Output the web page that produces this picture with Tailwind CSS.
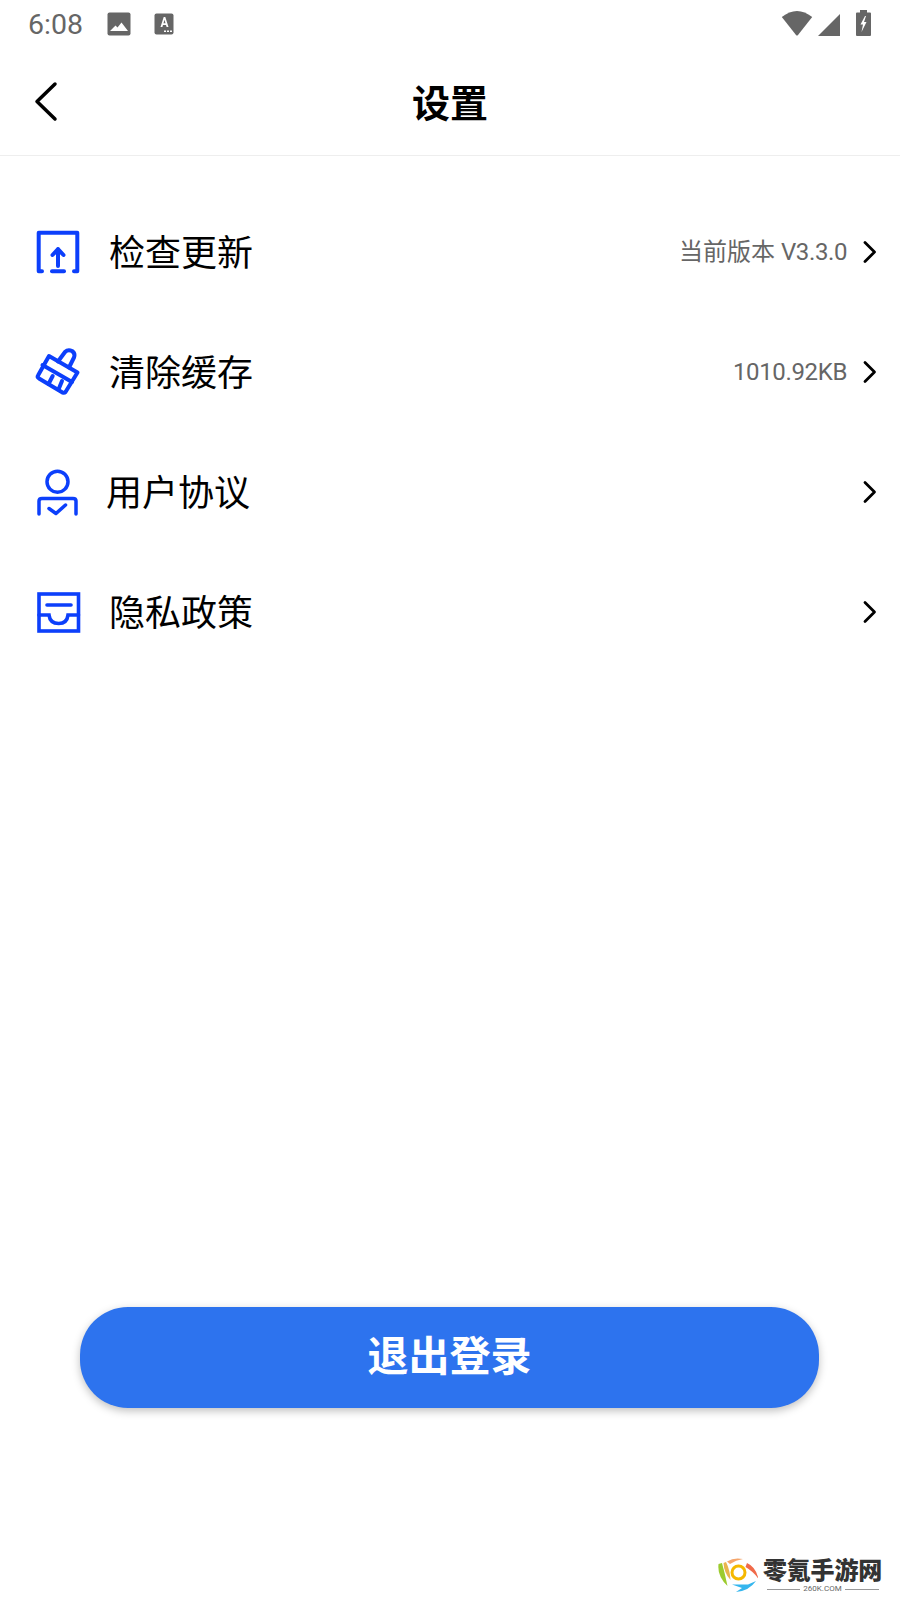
<!DOCTYPE html><html lang="zh-CN">
<head>
  <meta charset="UTF-8" />
  <meta name="viewport" content="width=device-width, initial-scale=1.0" />
  <title>设置</title>
  <script src="https://cdn.jsdelivr.net/npm/@tailwindcss/browser@4"></script>
</head>
<body class="bg-white font-['Roboto','Noto_Sans_CJK_SC',sans-serif]">
  <div class="relative flex flex-col w-[900px] h-[1600px] overflow-hidden">
    <!-- Status bar -->
    <div class="flex items-center h-[48px] pl-[28px] pr-[29px] text-[#666]">
      <span class="mt-[2px] text-[28.5px] leading-none">6:08</span>
      <svg class="ml-[24px]" width="24" height="24" viewBox="0 0 24 24"><rect width="23" height="23" x="0.5" y="0.5" rx="2" fill="#666"/><path d="M3 19 L8.5 13.5 L10.5 15.5 L14.5 10.5 L21 19Z" fill="#fff"/></svg>
      <svg class="ml-[23px]" width="20" height="22" viewBox="0 0 20 22"><rect width="19" height="21" x="0.5" y="0.5" rx="2" fill="#666"/><path d="M9.7 4 L11.3 4 L14.5 14 L12.6 14 L12 12 L9 12 L8.4 14 L6.5 14Z M9.5 10.3 L11.5 10.3 L10.5 6.8Z" fill="#fff" fill-rule="evenodd"/><path d="M10 17.5h2v1.6h-2zM13 17.5h2v1.6h-2zM16 17.5h2v1.6h-2z" fill="#fff"/></svg>
      <svg class="ml-auto -mt-[1px]" width="32" height="25" viewBox="0 0 31 25"><path d="M0.3 6 Q15.5 -6 30.7 6 L16.5 24 Q15.5 25 14.5 24Z" fill="#666"/></svg>
      <svg class="ml-[5px] mt-[2px]" width="22" height="22" viewBox="0 0 22 22"><path d="M22 0V22H0Z" fill="#666"/></svg>
      <svg class="ml-[16px] -mt-[2px]" width="15" height="26" viewBox="0 0 15 26"><path d="M4 0H11V2.500H14Q15 2.500 15 3.500V25Q15 26 14 26H1Q0 26 0 25V3.500Q0 2.500 1 2.500H4Z" fill="#666"/><path d="M9 6 L4.500 14.500 L7 14.500 L5.500 22 L10.500 12 L8 12 L10 6Z" fill="#fff"/></svg>
    </div>

    <!-- Header -->
    <div class="grid grid-cols-[1fr_auto_1fr] items-center h-[108px] border-b border-[#eee]">
      <svg class="ml-[34px]" width="26" height="42" viewBox="0 0 26 42"><path d="M21 3 L3 20.500 L21 38" fill="none" stroke="#000" stroke-width="3.500" stroke-linecap="round" stroke-linejoin="round"/></svg>
      <h1 class="pt-[4px] text-[38px] font-bold text-black leading-none">设置</h1>
      <div></div>
    </div>

    <!-- Rows -->
    <div class="flex flex-col pt-[36px]">
      <div class="flex items-center h-[120px] pl-[34px] pr-[22px]">
        <svg width="48" height="48" viewBox="0 0 48 48" fill="none" stroke="#0c3ffb" stroke-width="4" stroke-linecap="round" stroke-linejoin="round"><path d="M8 43.300H4.700V4.700H43.300V43.300H40"/><path d="M18 43.300H30"/><path d="M24 21V38M18.500 27L24 21L29.500 27"/></svg>
        <span class="ml-[27px] pt-[4px] text-[36px] text-black leading-none">检查更新</span>
        <span class="ml-auto text-[24px] text-[#666] leading-none">当前版本 <span class="tracking-[-0.4px]">V3.3.0</span></span>
        <svg class="ml-[15px]" width="16" height="24" viewBox="0 0 16 24"><path d="M3 2.500L12.500 12L3 21.500" fill="none" stroke="#000" stroke-width="2.800" stroke-linecap="round" stroke-linejoin="round"/></svg>
      </div>
      <div class="flex items-center h-[120px] pl-[34px] pr-[22px]">
        <svg width="48" height="48" viewBox="0 0 48 48" fill="none" stroke="#0c3ffb" stroke-width="4" stroke-linecap="round" stroke-linejoin="round"><path d="M15 8L43.500 24.500L31.500 44Q30.500 45 28.500 44.500L5 30.500Q3 29 4 27.500Z"/><path d="M24 13.500L31 4Q34 1 38 3Q41.500 5.500 40 9.500L35 19.500"/><path d="M8.500 17L38 34"/><path d="M14.500 36L18.700 28M24.500 41.500L28 33"/></svg>
        <span class="ml-[27px] pt-[4px] text-[36px] text-black leading-none">清除缓存</span>
        <span class="ml-auto text-[24px] text-[#666] leading-none tracking-[-0.35px]">1010.92KB</span>
        <svg class="ml-[15px]" width="16" height="24" viewBox="0 0 16 24"><path d="M3 2.500L12.500 12L3 21.500" fill="none" stroke="#000" stroke-width="2.800" stroke-linecap="round" stroke-linejoin="round"/></svg>
      </div>
      <div class="flex items-center h-[120px] pl-[34px] pr-[22px]">
        <svg width="48" height="48" viewBox="0 0 48 48" fill="none" stroke="#0c3ffb" stroke-width="3.500" stroke-linecap="round" stroke-linejoin="round"><circle cx="23.500" cy="13.700" r="10.500"/><path d="M5 46V33Q5 30.500 8 30.500H39Q42 30.500 42 33V46"/><path d="M15 40.500L22 45.500L31.500 37"/></svg>
        <span class="ml-[24px] pt-[4px] text-[36px] text-black leading-none">用户协议</span>
        <svg class="ml-auto" width="16" height="24" viewBox="0 0 16 24"><path d="M3 2.500L12.500 12L3 21.500" fill="none" stroke="#000" stroke-width="2.800" stroke-linecap="round" stroke-linejoin="round"/></svg>
      </div>
      <div class="flex items-center h-[120px] pl-[34px] pr-[22px]">
        <svg width="48" height="48" viewBox="0 0 48 48" fill="none" stroke="#0c3ffb" stroke-width="3.600" stroke-linecap="round"><rect x="5" y="6" width="39.500" height="37"/><path d="M13 17H37"/><path d="M5 27H15Q16 35.500 24.700 35.500Q33 35.500 34 27H44.500"/></svg>
        <span class="ml-[27px] pt-[4px] text-[36px] text-black leading-none">隐私政策</span>
        <svg class="ml-auto" width="16" height="24" viewBox="0 0 16 24"><path d="M3 2.500L12.500 12L3 21.500" fill="none" stroke="#000" stroke-width="2.800" stroke-linecap="round" stroke-linejoin="round"/></svg>
      </div>
    </div>

    <!-- Logout -->
    <button class="mt-auto mb-[192px] ml-[80px] w-[739px] h-[101px] rounded-[48px] bg-[#2d73ee] text-white text-[41px] font-bold shadow-[0_3px_8px_rgba(0,0,0,0.25)]">退出登录</button>

    <!-- Watermark -->
    <div class="absolute right-[18px] bottom-[6px] flex items-start gap-[5px]">
      <svg class="mt-[1px]" width="40" height="35" viewBox="0 0 40 35" fill="none">
        <path d="M0.500 6Q-1 18 9.500 28Q7 16 4 5Z" fill="#9ccb2e"/>
        <path d="M5.500 5Q6 15 12.500 22Q12 12 8 4Z" fill="#e9b44c"/>
        <path d="M9 3.500Q16 -1 25 1Q18 2 12 6Z" fill="#f5a56b"/>
        <path d="M29 5Q38 9 40.500 21Q36 14 27.500 9Z" fill="#f06a4a"/>
        <path d="M14 26.500H30L38 23Q31 33 18 34L24 30Z" fill="#35b6ee"/>
        <circle cx="20.500" cy="14.500" r="6.500" stroke="#f5b800" stroke-width="3"/>
      </svg>
      <div class="flex flex-col items-center pt-[1px]">
        <span class="text-[24px] leading-[26px] font-black text-[#333] tracking-[-0.2px]">零氪手游网</span>
        <div class="flex items-center gap-[3px] w-[112px] text-[8px] leading-[10px] text-[#666]">
          <span class="flex-1 h-px bg-[#999]"></span>260K.COM<span class="flex-1 h-px bg-[#999]"></span>
        </div>
      </div>
    </div>
  </div>
</body>
</html>
